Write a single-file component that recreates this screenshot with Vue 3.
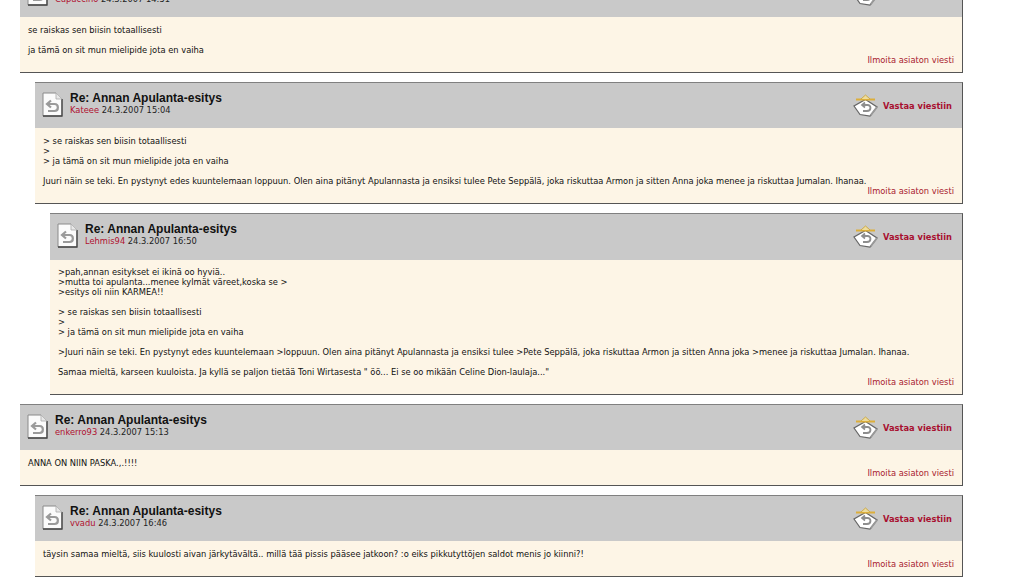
<script setup>
const posts = [
  { level: 0, user: 'Cupuccino', date: '24.3.2007 14:51', minH: 55, lines: [['se raiskas sen biisin totaallisesti'], ['ja tämä on sit mun mielipide jota en vaiha']] },
  { level: 1, user: 'Kateee', date: '24.3.2007 15:04', minH: 75, lines: [['> se raiskas sen biisin totaallisesti', '>', '> ja tämä on sit mun mielipide jota en vaiha'], ['Juuri näin se teki. En pystynyt edes kuuntelemaan loppuun. Olen aina pitänyt Apulannasta ja ensiksi tulee Pete Seppälä, joka riskuttaa Armon ja sitten Anna joka menee ja riskuttaa Jumalan. Ihanaa.']] },
  { level: 2, user: 'Lehmis94', date: '24.3.2007 16:50', minH: 134, lines: [['>pah,annan esitykset ei ikinä oo hyviä..', '>mutta toi apulanta...menee kylmät väreet,koska se >', '>esitys oli niin KARMEA!!'], ['> se raiskas sen biisin totaallisesti', '>', '> ja tämä on sit mun mielipide jota en vaiha'], ['>Juuri näin se teki. En pystynyt edes kuuntelemaan >loppuun. Olen aina pitänyt Apulannasta ja ensiksi tulee >Pete Seppälä, joka riskuttaa Armon ja sitten Anna joka >menee ja riskuttaa Jumalan. Ihanaa.'], ['Samaa mieltä, karseen kuuloista. Ja kyllä se paljon tietää Toni Wirtasesta " öö... Ei se oo mikään Celine Dion-laulaja..."']] },
  { level: 0, user: 'enkerro93', date: '24.3.2007 15:13', minH: 35, lines: [['ANNA ON NIIN PASKA.,.!!!!']] },
  { level: 1, user: 'vvadu', date: '24.3.2007 16:46', minH: 35, lines: [['täysin samaa mieltä, siis kuulosti aivan järkytävältä.. millä tää pissis pääsee jatkoon? :o eiks pikkutyttöjen saldot menis jo kiinni?!']] }
]
</script>

<template>
  <div class="thread">
    <article v-for="(p, i) in posts" :key="i" class="post" :class="'level' + p.level">
      <header class="head">
        <svg class="doc" width="21" height="25" viewBox="0 0 21 25">
          <path d="M1 1H14L20 7V24H1Z" fill="#fbfbfb" stroke="#8a8a8a" stroke-width="1"/>
          <path d="M20 7V24H1" fill="none" stroke="#444" stroke-width="1.3"/>
          <path d="M14 1V7H20" fill="#e8e8e8" stroke="#aaa" stroke-width="0.8"/>
          <path d="M5 12H12.5C17 12 17 19 12.5 19H6" fill="none" stroke="#9a9a9a" stroke-width="2.2"/>
          <path d="M9 8.5L5 12L9 15.5" fill="none" stroke="#9a9a9a" stroke-width="2.2"/>
        </svg>
        <div class="meta">
          <h3 class="title">Re: Annan Apulanta-esitys</h3>
          <div class="sub"><a class="user">{{ p.user }}</a> {{ p.date }}</div>
        </div>
        <a class="reply">
          <svg class="reply-icon" width="25" height="23" viewBox="0 0 25 23">
            <path d="M12.5 5.5L24 13L17 22L7 20.5L1 12Z" fill="#fff" stroke="#666" stroke-width="1.2"/>
            <path d="M17.5 21.5L24 13" stroke="#999" stroke-width="2"/>
            <path d="M3 5.5H22" stroke="#dcae3a" stroke-width="2"/>
            <path d="M8 5L12.5 1L17 5" fill="#eedc9c" stroke="#c8a030" stroke-width="0.8"/>
            <path d="M9 11H14.5C18.5 11 18.5 17 14 17H10" fill="none" stroke="#8e8e8e" stroke-width="1.9"/>
            <path d="M12 8.5L9 11L12 13.5" fill="none" stroke="#8e8e8e" stroke-width="1.7"/>
          </svg>
          <span>Vastaa viestiin</span>
        </a>
      </header>
      <div class="body" :style="{ minHeight: p.minH + 'px' }">
        <p v-for="(para, j) in p.lines" :key="j" class="para">
          <template v-for="(line, k) in para" :key="k">{{ line }}<br v-if="k < para.length - 1"></template>
        </p>
        <a class="report">Ilmoita asiaton viesti</a>
      </div>
    </article>
  </div>
</template>

<style>
html, body { background: #fff; overflow: hidden; }
</style>

<style scoped>
.thread { margin-top: -29px; width: 963px; font-family: "DejaVu Sans", Verdana, sans-serif; font-size: 8.32px; color: #111; }
.post { margin-bottom: 9px; border-top: 1px solid #808080; border-right: 1px solid #555; border-bottom: 1px solid #555; }
.level0 { margin-left: 20px; }
.level1 { margin-left: 35px; }
.level2 { margin-left: 50px; }
.head { height: 45px; background: #c9c9c9; display: flex; align-items: center; padding: 0 10px 0 7px; box-sizing: border-box; }
.level2 .head { height: 46px; padding-bottom: 1px; }
.level2 .body { padding-top: 7px; }
.doc { flex: none; margin-right: 7px; margin-top: -2px; }
.meta { flex: 1; margin-top: -4px; }
.title { margin: 0; font: bold 12px/13px "Liberation Sans", Arial, sans-serif; color: #111; }
.sub { font-size: 8.32px; line-height: 10px; color: #222; }
.user { color: #b01030; }
.reply { display: flex; align-items: center; gap: 5px; font-weight: bold; color: #a81030; margin-top: 1px; }
.reply-icon { margin-top: -1px; }
.body { background: #fdf5e6; padding: 8px 8px 0 8px; position: relative; box-sizing: border-box; line-height: 10px; }
.para { margin: 0 0 10px; }
.report { position: absolute; right: 8px; bottom: 7px; color: #a8202f; line-height: 10px; }
</style>
